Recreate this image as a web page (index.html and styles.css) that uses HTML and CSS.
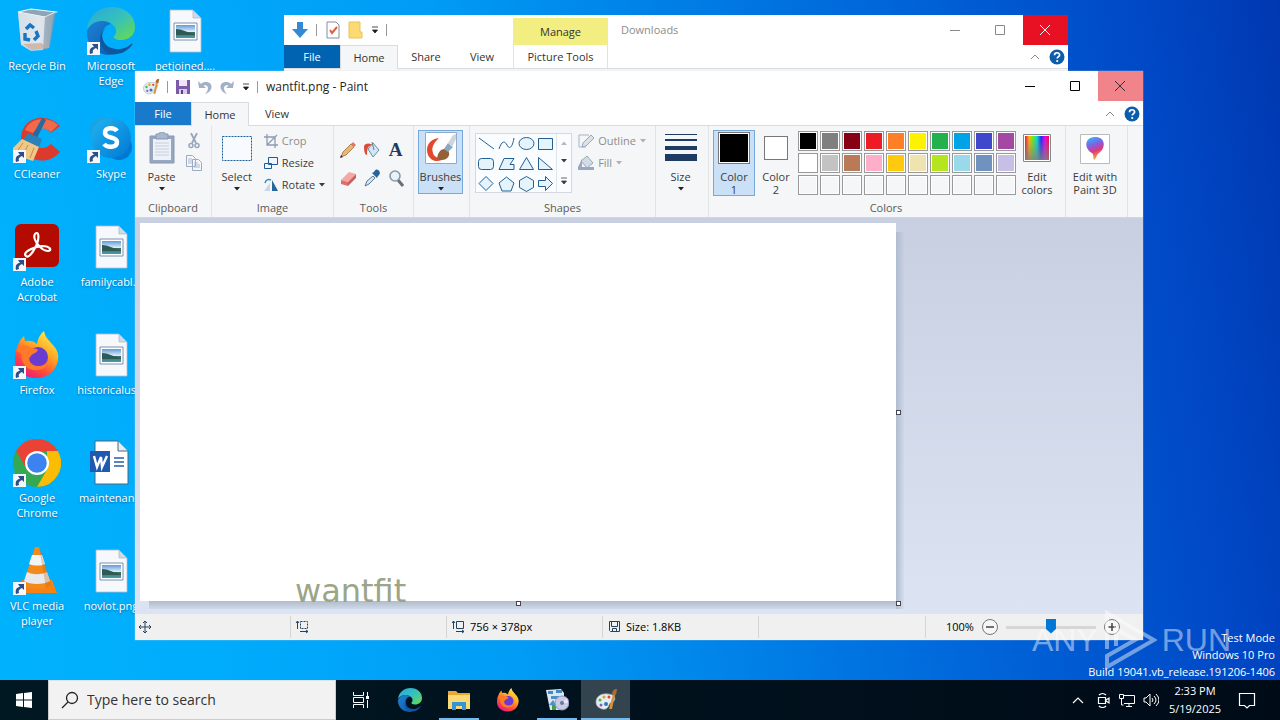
FILE: index.html
```html
<!DOCTYPE html>
<html lang="en">
<head>
<meta charset="utf-8">
<title>Desktop</title>
<link rel="stylesheet" href="styles.css">
</head>
<body>
<svg class="defs" aria-hidden="true">
  <defs>
    <linearGradient id="edgeTop" x1="0" y1="0" x2="1" y2="1"><stop offset="0" stop-color="#2aa7dc"/><stop offset=".5" stop-color="#35c1bd"/><stop offset="1" stop-color="#6cdc45"/></linearGradient>
    <linearGradient id="edgeLow" x1="0" y1="0" x2="1" y2="1"><stop offset="0" stop-color="#1d83d4"/><stop offset="1" stop-color="#0b58ad"/></linearGradient>
    <linearGradient id="fox" x1=".8" y1="0" x2=".2" y2="1"><stop offset="0" stop-color="#fff04a"/><stop offset=".4" stop-color="#ffa321"/><stop offset=".7" stop-color="#ff4a3d"/><stop offset="1" stop-color="#e31587"/></linearGradient>
    <linearGradient id="sky" x1="0" y1="0" x2="0" y2="1"><stop offset="0" stop-color="#5f9bdc"/><stop offset=".5" stop-color="#dcebf5"/><stop offset=".55" stop-color="#3a6b55"/><stop offset="1" stop-color="#4b9ab8"/></linearGradient>
    <linearGradient id="rainbow"><stop offset="0" stop-color="#f04"/><stop offset=".17" stop-color="#fb0"/><stop offset=".34" stop-color="#6e2"/><stop offset=".5" stop-color="#0dd"/><stop offset=".67" stop-color="#22f"/><stop offset=".84" stop-color="#e0e"/><stop offset="1" stop-color="#f03"/></linearGradient>
    <linearGradient id="fade" x1="0" y1="0" x2="0" y2="1"><stop offset="0" stop-color="#808080" stop-opacity="0"/><stop offset="1" stop-color="#808080" stop-opacity=".85"/></linearGradient>
    <linearGradient id="skype" x1="0" y1="0" x2="1" y2="1"><stop offset="0" stop-color="#22b4f0"/><stop offset="1" stop-color="#0078d4"/></linearGradient>
    <linearGradient id="bin" x1="0" y1="0" x2="1" y2="0"><stop offset="0" stop-color="#b9cddd"/><stop offset=".6" stop-color="#e4e8ec"/><stop offset="1" stop-color="#9fb0c0"/></linearGradient>
    <linearGradient id="drop" x1="0" y1="0" x2=".3" y2="1"><stop offset="0" stop-color="#25c5f3"/><stop offset=".4" stop-color="#7a65e8"/><stop offset=".7" stop-color="#e0387c"/><stop offset="1" stop-color="#f9a13a"/></linearGradient>
    <symbol id="i-arrow" viewBox="0 0 13 13"><path d="M0 0h13v13H0z" fill="#f4f6fa"/><path d="M3 12C2 7 4 5 7 5L5 2h6v6L9 6C6 7 5 9 6 11z" fill="#2b4f88"/></symbol>
    <symbol id="i-edge" viewBox="0 0 48 48"><path d="M0 22C2 8 12 0 25 0c14 0 23 9 23 20 0 8-6 13-14 13-5 0-8-2-7-4 3-2 3-8-1-11C18 11 6 13 0 22z" fill="url(#edgeTop)"/><path d="M0 24C4 14 17 11 24 17c-6 1-10 7-9 14 1 8 6 14 14 16C13 51-1 40 0 24z" fill="url(#edgeLow)"/><path d="M20 20c-8 5-5 16 2 20 8 4 17 2 22-3 2-1 2 0 1 1-5 7-13 10-20 9-13-2-16-21-5-27z" fill="#12559f"/></symbol>
    <symbol id="i-fox" viewBox="0 0 48 48"><path d="M5 14c1-4 4-7 6-9l1 5c5-1 9 0 12 3 1-6 4-11 7-13 1 6 4 8 8 13 5 5 7 10 6 16-2 11-10 18-22 18C10 47 1 38 2 27c0-5 1-9 3-13z" fill="url(#fox)"/><circle cx="25" cy="26" r="10" fill="#6a3bd0"/><path d="M3 20c4-6 9-7 14-4 3 2 7 1 8 3-1 3-7 4-7 6-4 2-1 10 7 10 5 0 8-2 10-5-1 7-7 10-14 9C10 38 8 27 8 22z" fill="#ff7a28"/></symbol>
    <symbol id="i-file" viewBox="0 0 48 48"><path d="M9 3h23l8 8v34H9z" fill="#f7f8fb" stroke="#aebdd0" stroke-width=".8"/><path d="M32 3v8h8z" fill="#cfd9e8" stroke="#9fb0c4" stroke-width=".6"/><path d="M13 16h23v17H13z" fill="#fff" stroke="#7892ad"/><path d="M15 18h19v13H15z" fill="url(#sky)"/><path d="M15 22c6 0 9 3 19 5v1H15z" fill="#2e5a55"/></symbol>
    <symbol id="i-palette" viewBox="0 0 24 24"><path d="M2 14C2 8 8 5 14 6c6 0 8 4 6 7-2 2-4 1-5 4s-3 5-7 4c-3-1-6-3-6-7z" fill="#e6edf1" stroke="#9daab2" stroke-width=".7"/><circle cx="6" cy="12" r="1.6" fill="#4fb84b"/><circle cx="10" cy="9" r="1.6" fill="#e4a22b"/><circle cx="15" cy="9" r="1.5" fill="#d9463a"/><circle cx="7" cy="17" r="1.5" fill="#845bc0"/><circle cx="12" cy="16" r="2" fill="#2e77b8"/><path d="M15 21l4-15 2 1-3 14z" fill="#d79436"/><path d="M18 6c0-3 2-5 5-5l-1 6z" fill="#b06a2c"/></symbol>
    <symbol id="i-help" viewBox="0 0 16 16"><circle cx="8" cy="8" r="7.5" fill="#0b5cab"/><path d="M5.5 6.2C5.5 3 10.600 3 10.600 6c0 1.800-2.400 1.800-2.400 3.600" fill="none" stroke="#fff" stroke-width="1.700"/><circle cx="8.200" cy="12" r="1.100" fill="#fff"/></symbol>
    <symbol id="i-save" viewBox="0 0 14 14"><path d="M0 0h14v14H0z" fill="#7b5ba8"/><path d="M3 0h8v6H3z" fill="#eee6f8"/><path d="M3 9h8v5H3z" fill="#d8cbe9"/><path d="M5 10h2v4H5z" fill="#5b3d8a"/></symbol>
    <symbol id="i-undo" viewBox="0 0 14 14"><path d="M0 1l1 7h7L5.500 5.500C10 4 12 9 7 14 15 12 16 2 8 2 6 2 4 2.500 3 4z" fill="#a3b1c8"/></symbol>
    <symbol id="i-more" viewBox="0 0 8 8"><path d="M1 1h6M1.500 4h5L4 7z" fill="currentColor" stroke="currentColor" stroke-width=".8"/></symbol>
    <symbol id="i-down" viewBox="0 0 6 4"><path d="M0 0h6L3 3.500z" fill="currentColor"/></symbol>
  </defs>
</svg>

<main class="desktop">
  <ul class="icons">
    <li class="icon"><svg viewBox="0 0 48 48"><path d="M5 5l3 32 10 6 18-2 5-35z" fill="url(#bin)"/><path d="M5 5l13-3 25 3-11 5z" fill="#8ea5b7" stroke="#f5f9fc" stroke-width="1.200"/><path d="M5 5l27 5-2 33-12 1-10-6z" fill="#dfe6eb" fill-opacity=".75"/><path d="M32 10l11-5-6 35-7 3z" fill="#899bac" fill-opacity=".6"/><path d="M10 37l8 6 18-2-8-5z" fill="#c9a796" fill-opacity=".7"/><path d="M13 22l4-4 4 3M23 24l2 5-4 4M17 33l-5-1 0-6" fill="none" stroke="#1675c4" stroke-width="3.400"/></svg><span>Recycle Bin</span></li>
    <li class="icon"><svg viewBox="0 0 48 48"><path d="M47 11C34-3 10 1 8 22c-1 20 23 33 39 15l-9-8c-8 8-18 3-18-6 0-10 11-14 18-5z" fill="#dc3a2d"/><path d="M45 10C35 1 18 2 12 15l8 3c4-6 12-6 18-1z" fill="#f36a4b"/><path d="M29 3l4 2-10 20-5-2z" fill="#276aa2"/><path d="M15 18l14 6-3 8-16-7z" fill="#2b82b9"/><path d="M9 24l17 8-6 14-12-4-9-8z" fill="#efc888"/><path d="M10 28l-5 7m10-5l-5 10m11-7l-4 10" stroke="#c48d49"/></svg><svg class="link"><use href="#i-arrow"/></svg><span>CCleaner</span></li>
    <li class="icon"><svg viewBox="0 0 48 48"><rect x="2" y="1" width="44" height="43" rx="6" fill="#b30b00"/><path d="M13 33c-4-3 6-9 16-10 9 0 10 5 6 5-7 0-16-12-13-17 4-4 5 5 0 14-3 6-7 10-9 8z" fill="none" stroke="#fff" stroke-width="2.200"/></svg><svg class="link"><use href="#i-arrow"/></svg><span>Adobe<br>Acrobat</span></li>
    <li class="icon"><svg><use href="#i-fox"/></svg><svg class="link"><use href="#i-arrow"/></svg><span>Firefox</span></li>
    <li class="icon"><svg viewBox="0 0 48 48"><circle cx="24" cy="24" r="24" fill="#35a853"/><path d="M3.200 12A24 24 0 0 1 44.800 12H24L13.600 30z" fill="#ea4335"/><path d="M44.800 12A24 24 0 0 1 24 48L34.400 30 34 12z" fill="#fbbc05"/><circle cx="24" cy="24" r="12" fill="#fff"/><circle cx="24" cy="24" r="9.800" fill="#3c82f0"/></svg><svg class="link"><use href="#i-arrow"/></svg><span>Google<br>Chrome</span></li>
    <li class="icon"><svg viewBox="0 0 48 48"><path d="M9 33h30l5 13H6z" fill="#f58212"/><path d="M22 0h4l12 38c-5 5-22 5-28 0z" fill="#f58a1c"/><path d="M19 8h10l3 9c-4 2-11 2-16 0z" fill="#f3f4f5"/><path d="M14 25c6 3 14 3 20 0l3 9c-6 4-20 4-26 0z" fill="#e7e9ec"/><path d="M26 0l12 38-5 3z" fill="#c85d04" fill-opacity=".3"/></svg><svg class="link"><use href="#i-arrow"/></svg><span>VLC media<br>player</span></li>
    <li class="icon"><svg><use href="#i-edge"/></svg><svg class="link"><use href="#i-arrow"/></svg><span>Microsoft<br>Edge</span></li>
    <li class="icon"><svg viewBox="0 0 48 48"><circle cx="16" cy="15" r="13" fill="#1aa3e4"/><circle cx="32" cy="32" r="13" fill="#0078d4"/><circle cx="24" cy="23" r="20" fill="url(#skype)"/><path d="M30 16c-3-4-12-4-12 2 0 6 12 3 12 9 0 6-10 6-13 2" fill="none" stroke="#fff" stroke-width="4.500"/></svg><svg class="link"><use href="#i-arrow"/></svg><span>Skype</span></li>
    <li class="icon"><svg><use href="#i-file"/></svg><span>familycabl...</span></li>
    <li class="icon"><svg><use href="#i-file"/></svg><span>historicalus...</span></li>
    <li class="icon"><svg viewBox="0 0 48 48"><path d="M8 2h23l10 10v33H8z" fill="#fff" stroke="#4d647f"/><path d="M31 2v10h10" fill="#e8edf3" stroke="#4d647f"/><path d="M27 19h10m-10 4h10m-10 4h10" stroke="#2a5caa" stroke-width="1.500"/><path d="M3 12h20v21H3z" fill="#2158b0"/><path d="M7 17l3 11 4-10 1 10 5-11" fill="none" stroke="#fff" stroke-width="2.400"/></svg><span>maintenan...</span></li>
    <li class="icon"><svg><use href="#i-file"/></svg><span>novlot.png</span></li>
    <li class="icon"><svg><use href="#i-file"/></svg><span>petjoined....</span></li>
  </ul>

  <section class="window explorer" aria-label="Downloads">
    <header class="titlebar">
      <div class="quick">
        <svg class="i18" viewBox="0 0 18 18"><path d="M6 1h6v7h5l-8 9-8-9h5z" fill="#3489d4"/></svg><i class="bar"></i>
        <svg class="i18" viewBox="0 0 18 18"><path d="M3 1h9l3 3v13H3z" fill="#fff" stroke="#858ca0"/><path d="M6 9l2 3 5-6" fill="none" stroke="#e1603c" stroke-width="2"/></svg>
        <svg class="i18 gap4" viewBox="0 0 18 18"><path d="M3 1h11v10h2v6H3z" fill="#fbda73" stroke="#e9c35b"/></svg>
        <svg class="i8"><use href="#i-more"/></svg><i class="bar"></i>
      </div>
      <button class="manage">Manage</button>
      <h2 class="wtitle dim">Downloads</h2>
      <div class="controls">
        <button aria-label="Minimize"><svg viewBox="0 0 10 10"><path d="M0 5.500h10" stroke="#888"/></svg></button>
        <button aria-label="Maximize"><svg viewBox="0 0 10 10"><path d="M.5.5h9v9h-9z" fill="none" stroke="#888"/></svg></button>
        <button class="close" aria-label="Close"><svg viewBox="0 0 10 10"><path d="M0 0l10 10M10 0L0 10" stroke="#fff"/></svg></button>
      </div>
    </header>
    <nav class="tabs">
      <button class="tab file">File</button><button class="tab on">Home</button><button class="tab">Share</button><button class="tab">View</button><button class="tab tools-tab">Picture Tools</button>
      <div class="tabend"><svg class="i8" viewBox="0 0 8 8"><path d="M0 6l4-4 4 4" fill="none" stroke="#888"/></svg><svg class="i16"><use href="#i-help"/></svg></div>
    </nav>
    <div class="under"></div>
  </section>

  <section class="window paint" aria-label="wantfit.png - Paint">
    <header class="titlebar">
      <div class="quick">
        <svg class="i18"><use href="#i-palette"/></svg><i class="bar"></i>
        <svg class="i14 gap4"><use href="#i-save"/></svg><svg class="i14 gap4"><use href="#i-undo"/></svg><svg class="i14 gap4 flip"><use href="#i-undo"/></svg><svg class="i8 gap4"><use href="#i-more"/></svg><i class="bar"></i>
      </div>
      <h1 class="wtitle">wantfit.png - Paint</h1>
      <div class="controls">
        <button aria-label="Minimize"><svg viewBox="0 0 10 10"><path d="M0 5.500h10" stroke="#000"/></svg></button>
        <button aria-label="Maximize"><svg viewBox="0 0 10 10"><path d="M.5.5h9v9h-9z" fill="none" stroke="#000"/></svg></button>
        <button class="close pale" aria-label="Close"><svg viewBox="0 0 10 10"><path d="M0 0l10 10M10 0L0 10" stroke="#333"/></svg></button>
      </div>
    </header>
    <nav class="tabs">
      <button class="tab file">File</button><button class="tab on">Home</button><button class="tab">View</button>
      <div class="tabend"><svg class="i8" viewBox="0 0 8 8"><path d="M0 6l4-4 4 4" fill="none" stroke="#888"/></svg><svg class="i16"><use href="#i-help"/></svg></div>
    </nav>

    <div class="ribbon">
      <div class="group clip">
        <div class="row">
          <button class="big"><svg class="pic" viewBox="0 0 32 32"><path d="M4 4h24v27H4z" fill="#98a7c0" stroke="#8797b4"/><path d="M7 7h18v21H7z" fill="#eef2f8"/><path d="M10 2h3c0-3 6-3 6 0h3v5H10z" fill="#aab7cd" stroke="#8797b4"/><path d="M9 11h14M9 14h14M9 17h14M9 20h14M9 23h14" stroke="#c4cede"/></svg><span>Paste</span><svg class="dn"><use href="#i-down"/></svg></button>
          <div class="stack">
            <button class="sm" aria-label="Cut"><svg class="i16" viewBox="0 0 16 16"><path d="M5 0l5 10M11 0L6 10" stroke="#98a5bd" stroke-width="1.800"/><circle cx="5" cy="12.500" r="2" fill="none" stroke="#98a5bd" stroke-width="1.500"/><circle cx="11" cy="12.500" r="2" fill="none" stroke="#98a5bd" stroke-width="1.500"/></svg></button>
            <button class="sm" aria-label="Copy"><svg class="i16" viewBox="0 0 16 16"><path d="M.5.5h6l3 3v8h-9zM6.500 4.500h6l3 3v8h-9z" fill="#f5f7fb" stroke="#9caac3"/><path d="M2 4h4M2 6h4M2 8h4M8 8h4M8 10h6M8 12h6" stroke="#adb9cd"/></svg></button>
          </div>
        </div>
        <p class="glabel">Clipboard</p>
      </div>
      <div class="group image">
        <div class="row">
          <button class="big"><svg class="pic" viewBox="0 0 32 32"><path d="M1.500 4.500h29v24h-29z" fill="#f7fbff" stroke="#1b5d99" stroke-dasharray="2 1"/></svg><span>Select</span><svg class="dn"><use href="#i-down"/></svg></button>
          <div class="stack">
            <button class="sm off"><svg class="i14" viewBox="0 0 14 14"><path d="M3 0v11h11M0 3h11v11M3 11L13 1" fill="none" stroke="#8d9bb5" stroke-width="1.300"/></svg>Crop</button>
            <button class="sm"><svg class="i14" viewBox="0 0 14 14"><path d="M4.500 1.500h9v7h-9zM.5 7.500h7v5h-7z" fill="#edf7ff" stroke="#1d5c94"/></svg>Resize</button>
            <button class="sm"><svg class="i14" viewBox="0 0 14 14"><path d="M0 13h6V5z" fill="#c5d7e8"/><path d="M8 2v11h6z" fill="#28669c"/><path d="M1 5c1-4 4-4 6-3" fill="none" stroke="#298dcd" stroke-width="1.400"/></svg>Rotate<svg class="dn"><use href="#i-down"/></svg></button>
          </div>
        </div>
        <p class="glabel">Image</p>
      </div>
      <div class="group tools">
        <div class="toolgrid">
          <button aria-label="Pencil"><svg class="i18" viewBox="0 0 18 18"><path d="M2 16l2-5 8-8 3 3-8 8z" fill="#e3bb78" stroke="#9f6a38" stroke-width=".8"/><path d="M12 3l2-2 3 3-2 2z" fill="#e07a62"/><path d="M1 17l1-3 2 2z" fill="#333"/></svg></button>
          <button aria-label="Fill with color"><svg class="i18" viewBox="0 0 18 18"><path d="M5 8l5-6 6 7-6 7z" fill="#d3e6f6" stroke="#6d88a5"/><path d="M9 1l2 8" stroke="#647d97"/><path d="M1 5c2-3 5-3 8-1-4 1-5 3-5 10-2 0-3-3-3-9z" fill="#db4c37"/></svg></button>
          <button aria-label="Text"><b class="text-a">A</b></button>
          <button aria-label="Eraser"><svg class="i18" viewBox="0 0 18 18"><path d="M2 11l8-8 7 2-8 8z" fill="#f4a8a4"/><path d="M2 11l7 2v4l-7-2z" fill="#dc6e70"/><path d="M9 13l8-8v4l-8 8z" fill="#c76064"/></svg></button>
          <button aria-label="Color picker"><svg class="i18" viewBox="0 0 18 18"><path d="M2 17l2-5 6-5 2 2-6 6z" fill="#d2e6f5" stroke="#5a7793"/><path d="M9 4l5 5 1-2c3-2 2-5 0-6s-3 0-4 2z" fill="#24659d"/></svg></button>
          <button aria-label="Magnifier"><svg class="i18" viewBox="0 0 18 18"><path d="M11 11l5 6" stroke="#6d6c70" stroke-width="3"/><circle cx="8" cy="7" r="5" fill="#e6f3fb" stroke="#8b98a7" stroke-width="1.600"/></svg></button>
        </div>
        <p class="glabel">Tools</p>
      </div>
      <div class="group brushes">
        <button class="big sel"><svg class="pic" viewBox="0 0 32 32"><path d="M.5.5h31v31H.5z" fill="#fff" stroke="#8faccc"/><path d="M14 6C4 7 0 15 3 23c4 8 12 7 17 3-7 1-11-1-12-5-2-6 1-10 6-15z" fill="#e2492a"/><path d="M12 27c1-8 5-12 11-9 4 7-3 12-11 9z" fill="#946138"/><path d="M19 17l4-6 5 4-5 5z" fill="#8ca7be"/><path d="M23 11l5-8 3-1v5l-4 8z" fill="#cdd6de"/></svg><span>Brushes</span><svg class="dn"><use href="#i-down"/></svg></button>
      </div>
      <div class="group shapes">
        <div class="row">
          <div class="gallery">
            <svg class="shapeset" viewBox="0 0 80 60" fill="#e4f3fc" stroke="#245f94"><path d="M3 4l15 11" fill="none"/><path d="M23 15c3-9 6-8 8-4s5 4 7-7" fill="none"/><ellipse cx="50.500" cy="9.500" rx="7.500" ry="6"/><path d="M62.500 4.500h14v11h-14z"/><rect x="2.500" y="24.500" width="15" height="11" rx="3"/><path d="M23 35.500l5-11h10l-4 6h4v5z"/><path d="M43.500 35.500l7-12 7 12z"/><path d="M62.500 35.500v-12l14 12z"/><path d="M3 49.500l7-7 7 7-7 7z"/><path d="M30.500 43l7.500 6-3 8h-9l-3-8z"/><path d="M50.500 42.500l7 4v7l-7 4-7-4v-7z"/><path d="M62.500 46.500h7v-4l7 7-7 7v-4h-7z"/></svg>
            <div class="scroll"><svg class="dn up"><use href="#i-down"/></svg><svg class="dn"><use href="#i-down"/></svg><svg class="i8"><use href="#i-more"/></svg></div>
          </div>
          <div class="stack">
            <button class="sm off"><svg class="i16" viewBox="0 0 16 16"><path d="M1 2h10M1 2v12h7" fill="none" stroke="#a7b3c7"/><path d="M4 14l1-4 8-8 3 3-8 8z" fill="#dce2ec" stroke="#98a7be"/></svg>Outline<svg class="dn"><use href="#i-down"/></svg></button>
            <button class="sm off"><svg class="i16" viewBox="0 0 16 16"><path d="M3 6l6-5 6 7-6 5z" fill="#d3dbe7" stroke="#98a7be"/><path d="M0 12l4-8v8h12v3H0z" fill="#99a8c0"/></svg>Fill<svg class="dn"><use href="#i-down"/></svg></button>
          </div>
        </div>
        <p class="glabel">Shapes</p>
      </div>
      <div class="group size">
        <button class="big"><svg class="pic" viewBox="0 0 32 32" fill="#1e3b61"><path d="M0 2h32v1H0zM0 7h32v2H0zM0 14h32v4H0zM0 22h32v7H0z"/></svg><span>Size</span><svg class="dn"><use href="#i-down"/></svg></button>
      </div>
      <div class="group colors">
        <div class="row">
          <button class="big swatch sel"><i class="chip"></i><span>Color<br>1</span></button>
          <button class="big swatch"><i class="chip two"></i><span>Color<br>2</span></button>
          <div class="palette">
            <button class="c1" aria-label="Black"></button><button class="c2" aria-label="Gray"></button><button class="c3" aria-label="Dark red"></button><button class="c4" aria-label="Red"></button><button class="c5" aria-label="Orange"></button><button class="c6" aria-label="Yellow"></button><button class="c7" aria-label="Green"></button><button class="c8" aria-label="Turquoise"></button><button class="c9" aria-label="Indigo"></button><button class="c10" aria-label="Purple"></button>
            <button class="c11" aria-label="White"></button><button class="c12" aria-label="Light gray"></button><button class="c13" aria-label="Brown"></button><button class="c14" aria-label="Rose"></button><button class="c15" aria-label="Gold"></button><button class="c16" aria-label="Light yellow"></button><button class="c17" aria-label="Lime"></button><button class="c18" aria-label="Light turquoise"></button><button class="c19" aria-label="Blue-gray"></button><button class="c20" aria-label="Lavender"></button>
            <button aria-label="Custom 1"></button><button aria-label="Custom 2"></button><button aria-label="Custom 3"></button><button aria-label="Custom 4"></button><button aria-label="Custom 5"></button><button aria-label="Custom 6"></button><button aria-label="Custom 7"></button><button aria-label="Custom 8"></button><button aria-label="Custom 9"></button><button aria-label="Custom 10"></button>
          </div>
          <button class="big edit"><svg class="pic" viewBox="0 0 32 32"><path d="M2.500 2.500h27v27h-27z" fill="#fff" stroke="#888"/><path d="M4 4h24v24H4z" fill="url(#rainbow)"/><path d="M4 4h24v24H4z" fill="url(#fade)"/></svg><span>Edit<br>colors</span></button>
        </div>
        <p class="glabel">Colors</p>
      </div>
      <div class="group p3d">
        <button class="big"><svg class="pic" viewBox="0 0 32 32"><path d="M1.500 2.500h29v29h-29z" fill="#fff" stroke="#bbb"/><path d="M16 5c11 0 11 11 4 16-3 2-2 5-5 7-1-3 0-5-2-7C5 17 5 5 16 5z" fill="url(#drop)"/></svg><span>Edit with<br>Paint 3D</span></button>
      </div>
    </div>

    <div class="work">
      <div class="canvas">
        <span class="drawn">wantfit</span>
        <i class="grip e"></i><i class="grip s"></i><i class="grip se"></i>
      </div>
    </div>

    <footer class="status">
      <div class="cell"><svg class="i12" viewBox="0 0 12 12"><path d="M6 0v12M0 6h12M4 2l2-2 2 2M4 10l2 2 2-2M2 4L0 6l2 2M10 4l2 2-2 2" fill="none" stroke="#24425f"/></svg></div>
      <div class="cell"><svg class="i14" viewBox="0 0 14 14"><path d="M2.500 1v8M1 3l1.500-2L4 3M5 11.500h8M11 10l2 1.500-2 1.500" fill="none" stroke="#24425f"/><path d="M5.500 1.500h7v7h-7z" fill="none" stroke="#24425f" stroke-dasharray="2 1"/></svg></div>
      <div class="cell"><svg class="i14" viewBox="0 0 14 14"><path d="M2.500 1v8M1 3l1.500-2L4 3M5 11.500h8M11 10l2 1.500-2 1.500M5.500 1.500h7v7h-7z" fill="none" stroke="#24425f"/></svg><span>756 × 378px</span></div>
      <div class="cell"><svg class="i14" viewBox="0 0 14 14"><path d="M2.500 1.500h10v10h-9l-1-1zM4.500 1.500v5h6v-5M5.500 11.500v-3h4v3" fill="none" stroke="#24425f"/></svg><span>Size: 1.8KB</span></div>
      <div class="cell rest"></div>
      <div class="zoom">
        <label for="zoom">100%</label>
        <button aria-label="Zoom out"><svg viewBox="0 0 16 16"><circle cx="8" cy="8" r="7.500" fill="#f6f6f6" stroke="#777"/><path d="M4 8h8" stroke="#444" stroke-width="1.500"/></svg></button>
        <input id="zoom" type="range" min="0" max="100" value="50">
        <button aria-label="Zoom in"><svg viewBox="0 0 16 16"><circle cx="8" cy="8" r="7.500" fill="#f6f6f6" stroke="#777"/><path d="M4 8h8M8 4v8" stroke="#444" stroke-width="1.500"/></svg></button>
      </div>
    </footer>
  </section>

  <div class="build">Test Mode<br>Windows 10 Pro<br>Build 19041.vb_release.191206-1406</div>
  <div class="mark"><span>ANY</span><svg viewBox="0 0 54 60"><path d="M4 39V3l47 27L4 57V46l28-16-19-11v17" fill="none" stroke="#fff" stroke-width="4"/></svg><span>RUN</span></div>
</main>

<footer class="taskbar">
  <button class="start" aria-label="Start"><svg class="i16" viewBox="0 0 16 16" fill="#fff"><path d="M0 2l7-1v6.500H0zM8 1l8-1v7.500H8zM0 8.500h7V15l-7-1zM8 8.500h8V16l-8-1z"/></svg></button>
  <label class="search"><svg class="i18" viewBox="0 0 18 18"><circle cx="11" cy="7" r="5.500" fill="none" stroke="#222" stroke-width="1.300"/><path d="M7 11l-6 6" stroke="#222" stroke-width="1.300"/></svg><input type="text" placeholder="Type here to search" aria-label="Search"></label>
  <button class="app" aria-label="Task view"><svg class="i18" viewBox="0 0 18 18"><path d="M1.500 1v3.500h10V1M1.500 6.500h10v5h-10zM1.500 17v-3.500h10V17M15.500 1v4M15.500 9v8" fill="none" stroke="#fff"/><path d="M14 5h3v3h-3z" fill="#fff"/></svg></button>
  <button class="app" aria-label="Edge"><svg class="i24"><use href="#i-edge"/></svg></button>
  <button class="app run" aria-label="File Explorer"><svg class="i24" viewBox="0 0 24 24"><path d="M1 3h8l2 2h12v16H1z" fill="#eba634"/><path d="M1 7h22v14H1z" fill="#fcd975"/><path d="M5 22v-8h14v8h-4v-4H9v4z" fill="#3295d6"/></svg></button>
  <button class="app" aria-label="Firefox"><svg class="i24"><use href="#i-fox"/></svg></button>
  <button class="app run" aria-label="Setup"><svg class="i24" viewBox="0 0 24 24"><path d="M1 2l15-1 3 4v17H5z" fill="#d8e8f3"/><path d="M3 3h5v3H3zM11 2h6v3h-6z" fill="#4589c4"/><path d="M6 8h8v3H6zM4 17l4-5 4 6z" fill="#4e90c5"/><path d="M7 17h4v5H7z" fill="#43a047"/><circle cx="17" cy="15" r="7" fill="#c9cbe2" stroke="#8e96bc"/><path d="M17 15l5-5 1 5z" fill="#eee4ff"/><circle cx="17" cy="15" r="2" fill="#6976a8"/></svg></button>
  <button class="app run active" aria-label="Paint"><svg class="i24"><use href="#i-palette"/></svg></button>
  <div class="tray">
    <svg class="i12 chev" viewBox="0 0 12 12"><path d="M1 9l5-5 5 5" fill="none" stroke="#fff" stroke-width="1.200"/></svg>
    <svg class="i16" viewBox="0 0 16 16"><path d="M3.500 5.500h7v6h-7zM11 8l3-2v5l-3-2M4 3c2-2 5-2 7 0M4 14c2 2 5 2 7 0" fill="none" stroke="#fff" stroke-width="1.200"/></svg>
    <svg class="i16" viewBox="0 0 16 16"><path d="M5 3.500h10.500v8H5M10 12v3M7 14.500h6M.5 2.500h4v4h-4zM2.500 7v6h2" fill="none" stroke="#fff"/></svg>
    <svg class="i16" viewBox="0 0 16 16"><path d="M1 6h2l4-4v12l-4-4H1zM9 6q2 2 0 4M11 4q4 4 0 8M13 2q6 6 0 12" fill="none" stroke="#fff"/></svg>
    <time class="clock">2:33 PM<br>5/19/2025</time>
    <svg class="i18" viewBox="0 0 18 18"><path d="M1.500 2.500h15v12h-5l-2.500 2.500-2.500-2.500h-5z" fill="none" stroke="#fff" stroke-width="1.200"/></svg>
  </div>
</footer>
</body>
</html>
```
FILE: styles.css
```css
* { box-sizing: border-box; }
body {
  margin: 0;
  height: 100vh;
  display: flex;
  flex-direction: column;
  overflow: hidden;
  font: 11px/14px "Open Sans", "Noto Sans", sans-serif;
  color: #1e1e1e;
}
button { border: 0; padding: 0; background: none; font: inherit; color: inherit; }
svg { display: block; flex: none; }
.defs { position: absolute; width: 0; height: 0; }
h1, h2, p, ul { margin: 0; padding: 0; font: inherit; }
.i8 { width: 8px; height: 8px; }
.i12 { width: 12px; height: 12px; }
.i14 { width: 14px; height: 14px; }
.i16 { width: 16px; height: 16px; }
.i18 { width: 18px; height: 18px; }
.i24 { width: 24px; height: 24px; }
.dn { width: 6px; height: 4px; }

.desktop {
  flex: 1;
  position: relative;
  overflow: hidden;
  background: linear-gradient(82deg, #00b2fd 0%, #00acfc 16%, #009cf5 38%, #006ede 66%, #0048c6 90%, #0038b0 100%);
}
.icons {
  list-style: none;
  display: grid;
  grid-auto-flow: column;
  grid-template-rows: repeat(6, 108px);
  grid-auto-columns: 74px;
  justify-content: start;
}
.icon {
  position: relative;
  display: flex;
  flex-direction: column;
  align-items: center;
  gap: 3px;
  padding-top: 7px;
  color: #fff;
  line-height: 15px;
  text-align: center;
  white-space: nowrap;
  text-shadow: 0 1px 2px rgba(0, 40, 90, .5);
}
.icon svg { width: 48px; height: 48px; }
.icon .link { position: absolute; left: 13px; top: 42px; width: 13px; height: 13px; }

.window { position: absolute; background: #fff; display: flex; flex-direction: column; }
.explorer { left: 284px; right: 212px; top: 15px; }
.paint { left: 135px; right: 137px; top: 71px; bottom: 40px; box-shadow: 0 0 1px #c8d8e8; }
.titlebar { display: flex; align-items: stretch; height: 31px; }
.explorer .titlebar { height: 30px; }
.quick { display: flex; align-items: center; gap: 7px; padding-left: 7px; }
.bar { width: 1px; height: 12px; background: #999; }
.paint .quick { padding-right: 8px; }
.explorer .quick { width: 229px; }
.gap4 { margin-left: 1px; }
.explorer .gap4 { margin-left: -3px; }
.flip { transform: scaleX(-1); }
.manage { width: 95px; margin-top: 3px; padding-top: 1px; background: #f2ee82; color: #333; }
.wtitle { align-self: center; font-size: 12px; }
.wtitle.dim { margin-left: 13px; color: #8c8c8c; font-size: 11px; }
.controls { margin-left: auto; display: flex; }
.controls button { width: 45px; height: 30px; display: flex; align-items: center; padding-left: 17px; }
.controls svg { width: 10px; height: 10px; }
.controls .close { background: #e81123; }
.controls .pale { background: #f1848b; }
.tabs { display: flex; height: 24px; border-bottom: 1px solid #dadbdc; }
.tab { width: 56px; color: #333; }
.tab.file { background: #1979ca; color: #fff; }
.explorer .file { background: #0063b1; }
.tab.on { width: 58px; height: 24px; background: #f5f6f7; border: 1px solid #dadbdc; border-width: 1px 1px 0; }
.tools-tab { width: 95px; margin-left: 3px; border: 1px solid #e2e2e2; border-width: 0 1px; }
.tabend { margin-left: auto; display: flex; align-items: center; gap: 10px; padding-right: 3px; }
.under { height: 30px; background: #f5f6f7; }

.ribbon { display: flex; height: 92px; background: #f5f6f7; border-bottom: 1px solid #d0d5df; color: #3c3c3c; }
.group { display: flex; flex-direction: column; align-items: center; padding-top: 4px; border-right: 1px solid #e2e3e4; }
.glabel { margin-top: auto; padding-bottom: 2px; color: #5a5a5a; }
.row { display: flex; align-items: flex-start; padding-right: 4px; }
.big { width: 42px; display: flex; flex-direction: column; align-items: center; color: #3c3c3c; line-height: 13px; padding-top: 2px; }
.big span { padding-top: 6px; white-space: nowrap; }
.big .dn { margin-top: 4px; color: #222; }
.pic { width: 32px; height: 32px; }
.sel { background: #c9e0f7; outline: 1px solid #76a8dc; outline-offset: -1px; }
.stack { display: flex; flex-direction: column; }
.sm { display: flex; align-items: center; gap: 4px; height: 22px; }
.off { color: #8d8d8d; }
.off .dn { color: #b0b0b0; }
.clip { width: 77px; }
.clip .stack { padding-left: 3px; }
.image { width: 122px; }
.image .stack { padding-left: 6px; }
.tools { width: 80px; }
.toolgrid { display: grid; grid-template-columns: repeat(3, 24px); grid-template-rows: repeat(2, 28px); place-items: center; padding: 6px 4px 0 0; }
.text-a { font: bold 19px/20px "Liberation Serif", serif; color: #1e3b61; }
.brushes { width: 56px; padding-right: 2px; }
.brushes .big { width: 45px; height: 64px; }
.shapes { width: 186px; }
.gallery { display: flex; width: 97px; height: 60px; margin: 3px 6px 0 0; background: #fafdff; border: 1px solid #d5d9df; }
.shapeset { width: 80px; height: 60px; }
.scroll { flex: 1; border-left: 1px solid #e1e4e8; display: flex; flex-direction: column; align-items: center; justify-content: space-around; }
.up { transform: rotate(180deg); color: #b8b8b8; }
.size { width: 53px; padding-right: 3px; }
.colors { width: 357px; padding-right: 2px; }
.colors .row { align-self: stretch; padding: 0 0 0 4px; }
.swatch { height: 66px; }
.chip { width: 32px; height: 32px; background: #000; border: 1px solid #777; outline: 1px solid #fff; outline-offset: -2px; }
.chip.two { width: 24px; height: 24px; margin: 4px; background: #fff; }
.palette { display: grid; grid-template-columns: repeat(10, 20px); grid-auto-rows: 20px; gap: 2px; margin: 1px 0 0 1px; }
.palette button { border: 1px solid #999; background: #f5f6f7; box-shadow: inset 0 0 0 1px #fff; }
.palette .c1 { background: #000; } .palette .c2 { background: #7f7f7f; } .palette .c3 { background: #880015; }
.palette .c4 { background: #ed1c24; } .palette .c5 { background: #ff7f27; } .palette .c6 { background: #fff200; }
.palette .c7 { background: #22b14c; } .palette .c8 { background: #00a2e8; } .palette .c9 { background: #3f48cc; }
.palette .c10 { background: #a349a4; } .palette .c11 { background: #fff; } .palette .c12 { background: #c3c3c3; }
.palette .c13 { background: #b97a57; } .palette .c14 { background: #ffaec9; } .palette .c15 { background: #ffc90e; }
.palette .c16 { background: #efe4b0; } .palette .c17 { background: #b5e61d; } .palette .c18 { background: #99d9ea; }
.palette .c19 { background: #7092be; } .palette .c20 { background: #c8bfe7; }
.p3d { width: 62px; padding-right: 3px; }

.work { flex: 1; min-height: 0; padding: 5px; background: linear-gradient(#c8cfe1, #dce4f3); }
.canvas {
  position: relative;
  width: 756px;
  height: 378px;
  background: #fff;
  display: flex;
  align-items: flex-end;
  padding-left: 155px;
}
.canvas::before,
.canvas::after { content: ""; position: absolute; }
.canvas::before { left: 100%; top: 9px; bottom: -8px; width: 8px; background: linear-gradient(90deg, #b0bccf, rgba(190, 200, 218, .2)); }
.canvas::after { left: 9px; right: 0; top: 100%; height: 8px; background: linear-gradient(#b0bccb, rgba(196, 206, 222, .5)); }
.drawn { position: relative; z-index: 1; font: 32px/20px "DejaVu Sans", sans-serif; color: #9ca58a; }
.grip { position: absolute; z-index: 1; width: 5px; height: 5px; background: #fff; border: 1px solid #445; }
.grip.e { right: -5px; top: 187px; }
.grip.s { bottom: -5px; left: 376px; }
.grip.se { right: -5px; bottom: -5px; }

.status { display: flex; height: 27px; background: #f0f0f0; border-top: 1px solid #dfe3ea; padding: 2px 0; color: #000; }
.cell { width: 156px; display: flex; align-items: center; gap: 5px; padding-left: 4px; border-right: 1px solid #d4d4d4; }
.cell.rest { flex: 1; }
.zoom { width: 217px; display: flex; align-items: center; gap: 8px; padding-left: 20px; }
.zoom button, .zoom button svg { width: 16px; height: 16px; }
.zoom input { appearance: none; width: 90px; height: 16px; margin: 0; background: none; }
.zoom input::-webkit-slider-runnable-track { height: 3px; background: #d6d6d6; }
.zoom input::-webkit-slider-thumb { appearance: none; width: 10px; height: 15px; margin-top: -7px; background: #0078d7; clip-path: polygon(0 0, 100% 0, 100% 70%, 50% 100%, 0 70%); }

.build { position: absolute; right: 5px; bottom: 0; color: #fff; text-align: right; line-height: 17px; }
.mark { position: absolute; right: 49px; bottom: 10px; display: flex; align-items: center; gap: 5px; opacity: .45; color: #fff; font: 32px/60px "Liberation Sans", sans-serif; }
.mark svg { width: 54px; height: 60px; }

.taskbar { flex: none; display: flex; height: 40px; background: linear-gradient(90deg, #001822, #000b18); color: #fff; }
.start { width: 48px; display: grid; place-items: center; }
.search { width: 288px; display: flex; align-items: center; gap: 8px; padding-left: 12px; background: #f2f2f2; border: 1px solid #ccc; border-top-color: #dce6ea; }
.search input { flex: 1; min-width: 0; border: 0; padding: 0; background: none; font: 14px/20px "Open Sans", sans-serif; }
.search input::placeholder { color: #333; opacity: 1; }
.app { width: 49px; display: grid; place-items: center; }
.run { background: linear-gradient(#76b9ed, #76b9ed) bottom / 40px 2px no-repeat; }
.active { background: linear-gradient(#76b9ed, #76b9ed) bottom / 100% 2px no-repeat, #34444f; }
.tray { margin-left: auto; display: flex; align-items: center; gap: 8px; padding-right: 24px; }
.chev { margin-right: 3px; }
.clock { width: 56px; margin-right: 7px; text-align: center; line-height: 18px; }
```
